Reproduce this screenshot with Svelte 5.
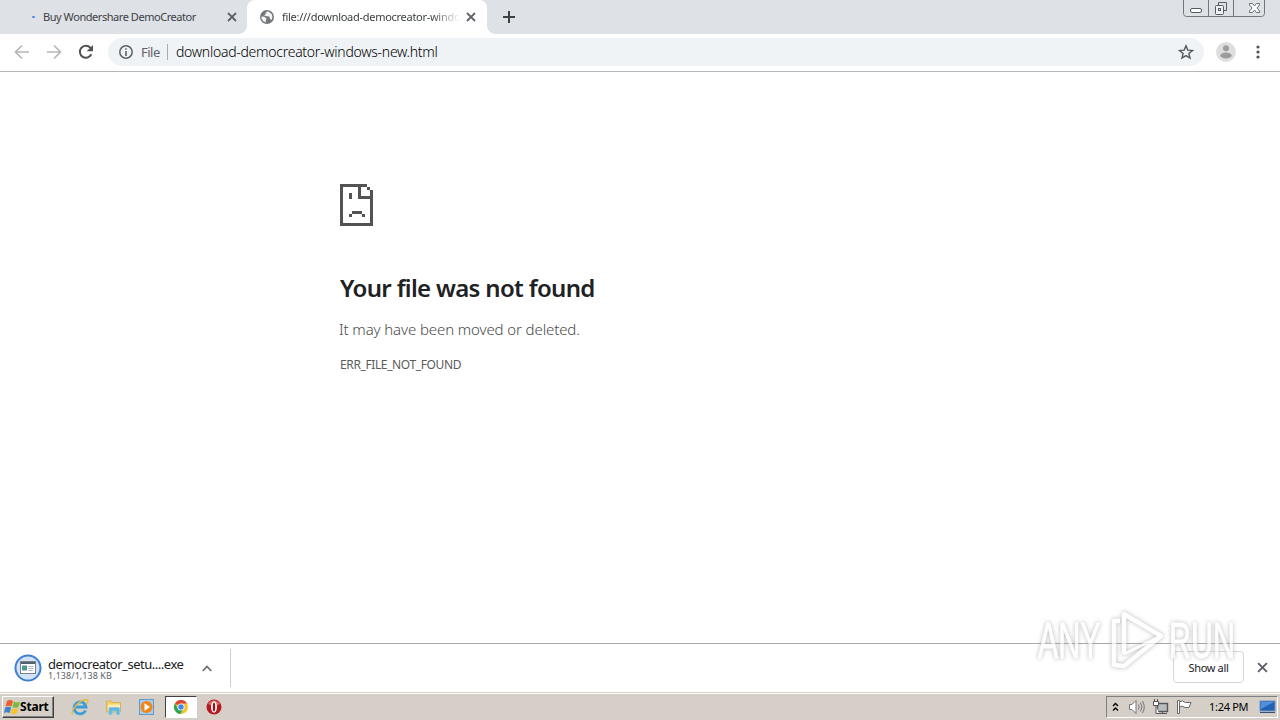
<script lang="ts">
  const tabs = [
    { title: 'Buy Wondershare DemoCreator', active: false },
    { title: 'file:///download-democreator-windo', active: true },
  ];
  const address = 'download-democreator-windows-new.html';
  const download = { name: 'democreator_setu....exe', progress: '1,138/1,138 KB' };
  const clock = '1:24 PM';
</script>

{#snippet cross(size: number)}
  <svg class="cross" width={size} height={size} viewBox="0 0 10 10">
    <path d="M1 1l8 8M9 1L1 9" fill="none" stroke="currentColor" stroke-width="1.8" />
  </svg>
{/snippet}

<div class="screen">
  <header class="tabstrip">
    {#each tabs as tab}
      <div class="tab" class:active={tab.active}>
        {#if tab.active}
          <svg class="favicon" width="14" height="14" viewBox="0 0 14 14">
            <circle cx="7" cy="7" r="7" fill="#75787b" />
            <path d="M1.5 6.5l3 .2 2 2-.7 1.7v2L3 11 1.5 8.5zM8 1.3L5.5 3v1.6L4 5.5l3 .8 2.5.2L10 9l1.500 1 1-3-.8-3z" fill="#f4f5f6" />
          </svg>
        {:else}
          <i class="spinner"></i>
        {/if}
        <span class="tab-title">{tab.title}</span>
        <button class="tab-close" aria-label="Close tab">{@render cross(10)}</button>
      </div>
    {/each}
    <button class="new-tab" aria-label="New tab">
      <svg width="12" height="12" viewBox="0 0 12 12"><path d="M6 0v12M0 6h12" stroke="#3c4043" stroke-width="2" /></svg>
    </button>
    <div class="window-controls">
      <svg width="82" height="17" viewBox="0 0 82 17" fill="none" stroke="#74777e">
        <path d="M.5 0v13.500q0 3 3 3h75q3 0 3-3V0M25.500 0v16M50.500 0v16" />
        <rect x="7.500" y="8.500" width="11" height="4" rx="1.500" fill="#fff" stroke="#565a62" />
        <path d="M35.500 5V2.500h8v8h-2.500" stroke="#565a62" />
        <rect x="32.500" y="5.500" width="8" height="9" rx="1" fill="#eef0f3" stroke="#565a62" />
        <rect x="35.500" y="8.500" width="2" height="2" stroke="#565a62" />
        <path d="M66.500 3.500h3l2 2.500 2-2.500h3v1.500L74 8l2.500 3v1.500h-3l-2-2.500-2 2.500h-3V11L69 8l-2.500-3z" fill="#fff" stroke="#6a6e75" />
      </svg>
    </div>
  </header>

  <div class="toolbar">
    <svg class="nav" width="16" height="16" viewBox="0 0 16 16" fill="none" stroke="#b4b6b8" stroke-width="1.7"><path d="M15 8H2M8 1.500L1.500 8 8 14.500" /></svg>
    <svg class="nav" width="16" height="16" viewBox="0 0 16 16" fill="none" stroke="#b4b6b8" stroke-width="1.7"><path d="M1 8h13M8 1.500L14.500 8 8 14.500" /></svg>
    <svg class="nav" width="16" height="16" viewBox="0 0 16 16"><path d="M13.300 10.300A6 6 0 1 1 12.300 3.700L14 5.500" fill="none" stroke="#505356" stroke-width="2" /><path d="M15 1v6.300H8.700z" fill="#505356" /></svg>
    <div class="omnibox">
      <svg width="14" height="14" viewBox="0 0 14 14"><circle cx="7" cy="7" r="6.200" fill="none" stroke="#5f6368" stroke-width="1.500" /><path d="M7 3.200v1.600M7 6v5" stroke="#5f6368" stroke-width="1.600" /></svg>
      <span class="scheme">File</span>
      <i class="divider"></i>
      <span class="address">{address}</span>
      <svg class="star" width="16" height="16" viewBox="0 0 16 16"><path d="M8 1.800l1.800 4.300 4.700.4-3.600 3 1.100 4.600L8 11.600l-4 2.500 1.100-4.600-3.600-3 4.700-.4z" fill="none" stroke="#54585c" stroke-width="1.400" /></svg>
    </div>
    <svg class="avatar" width="20" height="20" viewBox="0 0 20 20"><circle cx="10" cy="10" r="10" fill="#dedede" /><circle cx="10" cy="6.300" r="3" fill="#9c9c9c" /><ellipse cx="10" cy="13.500" rx="5.700" ry="3" fill="#9c9c9c" /></svg>
    <svg class="menu" width="4" height="14" viewBox="0 0 4 14" fill="#505356"><circle cx="2" cy="2" r="1.600" /><circle cx="2" cy="7" r="1.600" /><circle cx="2" cy="12" r="1.600" /></svg>
  </div>

  <main>
    <svg class="sad-file" width="33" height="42" viewBox="0 0 33 42" fill="#535353" shape-rendering="crispEdges">
      <path d="M0 0h27v3h-6v9h9V6h3v36H0zM3 3v36h27V15H18V3z" fill-rule="evenodd" />
      <path d="M27 3h3v3h-3zM9 9h3v6H9zM12 27h10v3H12zM9 30h3v3H9zM22 30h3v3h-3z" />
    </svg>
    <h1>Your file was not found</h1>
    <p class="summary">It may have been moved or deleted.</p>
    <p class="code">ERR_FILE_NOT_FOUND</p>
  </main>

  <footer class="shelf">
    <div class="item">
      <svg width="28" height="28" viewBox="0 0 28 28">
        <circle cx="14" cy="14" r="12.500" fill="#d3e2f8" stroke="#3c7fd6" stroke-width="2" />
        <rect x="6.500" y="7.500" width="15" height="12" fill="#fff" stroke="#7c8188" />
        <path d="M7 9h14" stroke="#51616e" stroke-width="2" />
        <path d="M8 11.500h5v5H8z" fill="#4a998f" />
        <path d="M14.500 12.500h5M14.500 14.500h5M14.500 16.500h4" stroke="#b0b4ba" />
      </svg>
      <div class="file">
        <span class="file-name">{download.name}</span>
        <span class="file-size">{download.progress}</span>
      </div>
      <svg class="chevron" width="10" height="7" viewBox="0 0 10 7"><path d="M.7 6L5 1.500 9.300 6" fill="none" stroke="#6d7073" stroke-width="1.800" /></svg>
    </div>
    <button class="show-all"><span>Show all</span></button>
    <button class="shelf-close" aria-label="Close downloads">{@render cross(11)}</button>
  </footer>

  <div class="taskbar">
    <button class="start">
      <svg width="17" height="16" viewBox="0 0 17 16">
        <path d="M3 2q3-2 6 0L7.500 7.500q-3-1.700-6 0z" fill="#e8602c" />
        <path d="M10 2.500q3 1.800 6 .3L14.500 8q-3 1.500-6 0z" fill="#7db83c" />
        <path d="M1.200 8.500q3-1.700 6 0L5.700 14q-3-1.700-5.700 0z" fill="#3f83cc" />
        <path d="M8.200 9q3 1.700 6 .3L12.700 14.500q-3 1.500-6 0z" fill="#f6c32c" />
      </svg>
      <span>Start</span>
    </button>
    <div class="quick">
      <svg width="18" height="18" viewBox="0 0 18 18" fill="none">
        <path d="M14.500 12.500A6 6 0 1 1 15 9H4.500" stroke="#3a9edb" stroke-width="2.800" />
        <path d="M2 16.500C-2 14 8 2 15 1.500c3.500 0 1.500 4 .5 5" stroke="#e9b93a" stroke-width="1.300" />
      </svg>
    </div>
    <div class="quick">
      <svg width="18" height="18" viewBox="0 0 18 18">
        <path d="M1.500 3h5l1 1.500h8V14h-14z" fill="#efd06b" stroke="#d4b458" />
        <path d="M3 6.500h12V12H3z" fill="#fbeeb0" />
        <path d="M4 16.500V10.500q0-1 1-1h8.500q1 0 1 1v6h-3V13H7v3.500z" fill="#62b5e0" stroke="#82c7e8" />
      </svg>
    </div>
    <div class="quick">
      <svg width="18" height="18" viewBox="0 0 18 18">
        <rect x="1.500" y="1.500" width="14" height="15" fill="#a6cdeb" stroke="#6399c8" />
        <circle cx="8.500" cy="9" r="6" fill="#f08418" />
        <path d="M6.500 5.200l5.500 3.800-5.500 3.800z" fill="#fff" />
      </svg>
    </div>
    <div class="quick pressed">
      <svg width="14" height="14" viewBox="0 0 14 14">
        <circle cx="7" cy="7" r="7" fill="#f5c52e" />
        <path d="M7 7L.9 3.500A7 7 0 0 1 13.100 3.500H7z" fill="#dc4437" />
        <path d="M.9 3.500A7 7 0 0 0 6.500 14L9.500 8.500 4 8.500z" fill="#2da457" />
        <circle cx="7" cy="7" r="3.500" fill="#fff" /><circle cx="7" cy="7" r="2.700" fill="#4385ec" />
      </svg>
    </div>
    <div class="quick">
      <svg width="16" height="16" viewBox="0 0 16 16">
        <circle cx="8" cy="8" r="7.500" fill="#b81820" /><path d="M2 5a7 7 0 0 1 12 0q-6 3-12 0z" fill="#db6a69" />
        <ellipse cx="8" cy="8" rx="3" ry="5.800" fill="#fff" /><ellipse cx="8" cy="8" rx="1.200" ry="4.500" fill="#971218" />
      </svg>
    </div>
    <div class="tray">
      <svg width="7" height="10" viewBox="0 0 7 10" fill="none" stroke="#000" stroke-width="1.400"><path d="M1 4l2.500-2.500L6 4M1 8.500L3.500 6 6 8.500" /></svg>
      <svg class="speaker" width="17" height="16" viewBox="0 0 17 16" fill="none" stroke="#77777a"><path d="M1.500 5.500H4l4-4v13l-4-4H1.500z" fill="#fff" /><path d="M10.500 5.500q1.500 2.500 0 5M12.500 3.500q3 4.500 0 9M14.500 2q3.500 6 0 12" /></svg>
      <svg class="network" width="17" height="16" viewBox="0 0 17 16" fill="none" stroke="#55565a"><rect x="5.500" y="4.500" width="10" height="8" fill="#b9bbbd" stroke-width="1.400" /><path d="M7 14.500h8M10.500 12.500v2" /><path d="M1.500 2.500h5v4h-5zM2.500 0v2.500M5.500 0v2.500M4 6.500v8h3" fill="#fff" /></svg>
      <svg class="flag" width="17" height="16" viewBox="0 0 17 16" fill="#fff" stroke="#66676a"><path d="M1.500 1.500h2v13h-2zM3.500 2.500q3-1.500 6 1h5.500l-2 5H9q-3-2.500-5.500-.5z" /></svg>
      <span class="clock">{clock}</span>
      <svg class="desktop" width="17" height="14" viewBox="0 0 17 14"><rect x="1" y="1" width="15" height="10" fill="#2262b5" stroke="#6f93be" /><path d="M2 2h13L2 9z" fill="#4f8fdb" /><path d="M1 12.500h15" stroke="#36506f" /></svg>
    </div>
  </div>

  <div class="watermark">
    <span class="word">ANY</span>
    <svg width="64" height="66" viewBox="0 0 64 66" fill="none" stroke="#fff" stroke-width="4.500" stroke-linejoin="round">
      <path d="M19 46V6l37 22-37 30-10-1V13h6" />
      <path d="M19 46l37-18" stroke-width="3" />
    </svg>
    <span class="word">RUN</span>
  </div>
</div>

<style>
  :global(body) {
    margin: 0;
    overflow: hidden;
  }

  .screen {
    position: relative;
    width: 1280px;
    height: 720px;
    display: flex;
    flex-direction: column;
    overflow: hidden;
    background: #fff;
    color: #202124;
    font-family: 'Noto Sans', sans-serif;
  }

  svg {
    display: block;
    flex: none;
  }

  button {
    padding: 0;
    border: 0;
    background: none;
    font: inherit;
    color: inherit;
  }

  .tabstrip {
    height: 34px;
    flex: none;
    display: flex;
    background: #dee1e6;
  }

  .tab {
    box-sizing: border-box;
    width: 247px;
    display: flex;
    align-items: center;
    padding: 0 10px 0 32px;
    color: #3c4043;
  }

  .tab.active {
    position: relative;
    width: 240px;
    padding: 0 11px 0 13px;
    background: #fff;
    border-radius: 8px 8px 0 0;
  }

  .tab.active::before,
  .tab.active::after {
    content: '';
    position: absolute;
    bottom: 0;
    left: -8px;
    width: 8px;
    height: 8px;
    background: radial-gradient(circle at 0 0, transparent 7.5px, #fff 8px);
  }

  .tab.active::after {
    left: auto;
    right: -8px;
    background: radial-gradient(circle at 100% 0, transparent 7.5px, #fff 8px);
  }

  .spinner {
    width: 3px;
    height: 2px;
    margin-right: 8px;
    border-radius: 1px;
    background: #4a8be8;
  }

  .favicon {
    margin-right: 8px;
  }

  .tab-title {
    flex: 1;
    white-space: nowrap;
    font-size: 11px;
    line-height: 16px;
    letter-spacing: -0.45px;
  }

  .active .tab-title {
    flex: none;
    width: 178px;
    letter-spacing: -0.28px;
    mask-image: linear-gradient(to right, #000 150px, transparent);
  }

  .tab-close {
    margin-left: auto;
    color: #5f6368;
  }

  .new-tab {
    width: 12px;
    margin-left: 16px;
  }

  .window-controls {
    margin-left: auto;
    margin-right: 15px;
  }

  .toolbar {
    box-sizing: border-box;
    height: 38px;
    flex: none;
    display: flex;
    align-items: center;
    padding: 0 20px 1px 14px;
    border-bottom: 1px solid #b4b5b6;
  }

  .nav {
    margin-right: 16px;
  }

  .omnibox {
    box-sizing: border-box;
    width: 1096px;
    height: 28px;
    margin-left: -2px;
    padding: 0 10px 0 11px;
    display: flex;
    align-items: center;
    border-radius: 14px;
    background: #f0f3f5;
    font-size: 14px;
    line-height: 20px;
  }

  .scheme {
    width: 19px;
    margin-left: 8px;
    color: #5f6368;
    font-size: 13px;
    letter-spacing: -0.5px;
  }

  .divider {
    width: 1px;
    height: 16px;
    margin: 0 8px 0 7px;
    background: #a9adb1;
  }

  .address {
    color: #000;
    font-weight: 300;
    letter-spacing: -0.27px;
    white-space: nowrap;
  }

  .star {
    margin-left: auto;
  }

  .avatar {
    margin-left: 12px;
  }

  .menu {
    margin-left: auto;
  }

  main {
    flex: 1;
    padding: 112px 0 0 340px;
  }

  h1 {
    margin: 45px 0 0;
    font-size: 24px;
    line-height: 34px;
    font-weight: 600;
    letter-spacing: -0.68px;
    white-space: nowrap;
  }

  .summary {
    margin: 13px 0 0 -1px;
    color: #4a4a4a;
    font-size: 15px;
    line-height: 22px;
    font-weight: 300;
    letter-spacing: -0.11px;
  }

  .code {
    margin: 17px 0 0;
    color: #5a5a5a;
    font-size: 12px;
    line-height: 16px;
    letter-spacing: -0.38px;
  }

  .shelf {
    box-sizing: border-box;
    height: 49px;
    flex: none;
    display: flex;
    align-items: center;
    border-top: 1px solid #a9a9a9;
    padding-right: 12px;
  }

  .item {
    box-sizing: border-box;
    width: 231px;
    height: 38px;
    display: flex;
    align-items: center;
    padding-left: 14px;
    border-right: 1px solid #cfcfcf;
  }

  .file {
    width: 136px;
    margin-left: 6px;
    display: flex;
    flex-direction: column;
    white-space: nowrap;
  }

  .file-name {
    font-size: 13px;
    line-height: 14px;
    letter-spacing: -0.47px;
  }

  .file-size {
    color: #5f6368;
    font-size: 9px;
    line-height: 9px;
    letter-spacing: 0.05px;
  }

  .chevron {
    margin-left: 18px;
  }

  .show-all {
    box-sizing: border-box;
    width: 71px;
    height: 32px;
    margin: 0 0 2px auto;
    border: 1px solid #d5d7da;
    border-radius: 4px;
    font-size: 11px;
    letter-spacing: -0.35px;
  }

  .shelf-close {
    margin: 0 0 2px 13px;
    color: #5f6368;
  }

  .taskbar {
    box-sizing: border-box;
    height: 28px;
    flex: none;
    display: flex;
    align-items: center;
    padding: 1px 2px 0;
    border-top: 1px solid #d6d2cb;
    box-shadow: inset 0 1px #fff;
    background: #d5cfc7;
  }

  .start {
    box-sizing: border-box;
    width: 52px;
    height: 22px;
    display: flex;
    align-items: center;
    padding: 0 0 1px 1px;
    border: 1px solid;
    border-color: #fff #404040 #404040 #fff;
    box-shadow: inset -1px -1px #808080;
    color: #000;
    font-size: 12px;
    font-weight: 700;
    letter-spacing: -0.2px;
    background: #d5cfc7;
  }

  .start span {
    margin-left: -1px;
  }

  .quick {
    box-sizing: border-box;
    width: 32px;
    height: 22px;
    margin-left: 1.5px;
    display: flex;
    align-items: center;
    justify-content: center;
  }

  .start + .quick {
    margin-left: 10px;
  }

  .pressed {
    border: 1px solid;
    border-color: #404040 #fff #fff #404040;
    background: #fff;
  }

  .tray {
    box-sizing: border-box;
    width: 172px;
    height: 22px;
    margin-left: auto;
    display: flex;
    align-items: center;
    padding-left: 5px;
    border: 1px solid;
    border-color: #808080 #fff #fff #808080;
    color: #000;
  }

  .speaker {
    margin-left: 9px;
  }

  .network,
  .flag {
    margin-left: 7px;
  }

  .clock {
    width: 40px;
    margin: 0 0 1px 16px;
    font-size: 11px;
    letter-spacing: -0.3px;
    white-space: nowrap;
  }

  .desktop {
    margin-left: 10px;
  }

  .watermark {
    position: absolute;
    left: 1038px;
    top: 608px;
    display: flex;
    align-items: center;
    opacity: 0.7;
    filter: drop-shadow(0 0 2px #999);
  }

  .word {
    width: 67px;
    font: 50px/66px 'Liberation Sans', sans-serif;
    color: #fff;
    -webkit-text-stroke: 1px #fff;
    transform: scaleX(0.61);
    transform-origin: 0 50%;
  }
</style>
